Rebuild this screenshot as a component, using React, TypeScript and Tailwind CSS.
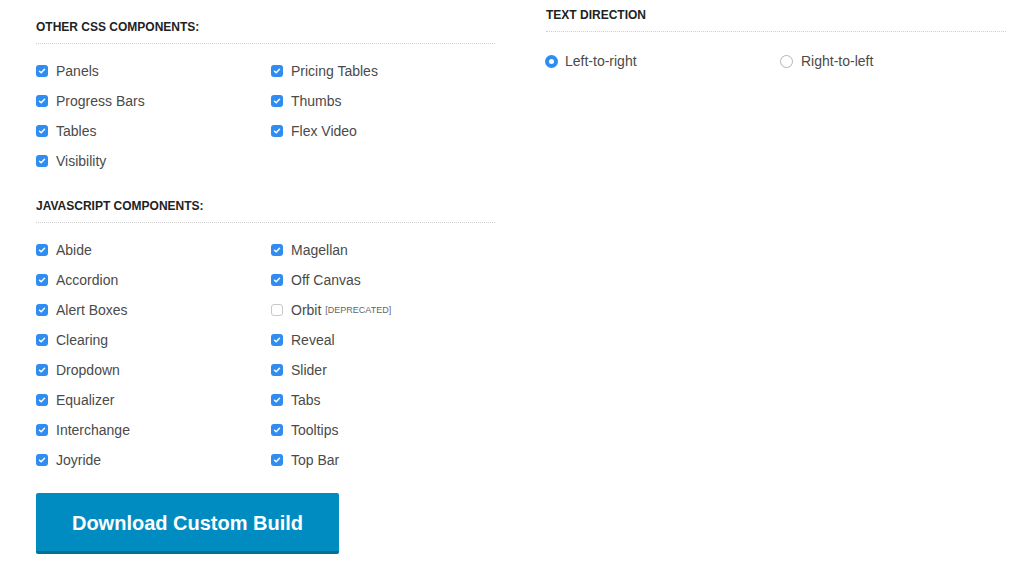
import { ReactNode } from "react";

const font = { fontFamily: '"Liberation Sans", Arial, sans-serif' };

function Check({ checked = true }: { checked?: boolean }) {
  if (!checked) {
    return <span className="inline-block h-[12px] w-[12px] rounded-[3px] border border-[#c8c8c8] bg-white" />;
  }
  return (
    <span className="inline-flex h-[12px] w-[12px] items-center justify-center rounded-[3px] bg-[#2f8cf0]">
      <svg width="8" height="8" viewBox="0 0 8 8" fill="none">
        <path d="M1.5 4.2 L3.2 5.8 L6.5 2.2" stroke="white" strokeWidth="1.5" strokeLinecap="round" strokeLinejoin="round" />
      </svg>
    </span>
  );
}

function Item({ label, checked = true, extra }: { label: string; checked?: boolean; extra?: ReactNode }) {
  return (
    <div className="flex h-[30px] items-center">
      <Check checked={checked} />
      <span className="ml-[8px] text-[14px] text-[#4a4a4a]">{label}</span>
      {extra}
    </div>
  );
}

function Heading({ children }: { children: ReactNode }) {
  return (
    <div className="border-b border-dotted border-[#cfcfcf] pb-[8px]">
      <h3 className="text-[12px] font-bold leading-[16px] text-[#222]">{children}</h3>
    </div>
  );
}

const css1 = ["Panels", "Progress Bars", "Tables", "Visibility"];
const css2 = ["Pricing Tables", "Thumbs", "Flex Video"];
const js1 = ["Abide", "Accordion", "Alert Boxes", "Clearing", "Dropdown", "Equalizer", "Interchange", "Joyride"];
const js2 = ["Magellan", "Off Canvas", "Orbit", "Reveal", "Slider", "Tabs", "Tooltips", "Top Bar"];

export default function App() {
  return (
    <div className="min-h-[578px] bg-white" style={font}>
      <div className="flex pl-[36px]">
        <div className="w-[459px] pt-[19px]">
          <Heading>OTHER CSS COMPONENTS:</Heading>
          <div className="mt-[12px] grid grid-cols-[235px_1fr]">
            <div>{css1.map((l) => <Item key={l} label={l} />)}</div>
            <div>{css2.map((l) => <Item key={l} label={l} />)}</div>
          </div>

          <div className="mt-[22px]">
            <Heading>JAVASCRIPT COMPONENTS:</Heading>
          </div>
          <div className="mt-[12px] grid grid-cols-[235px_1fr]">
            <div>{js1.map((l) => <Item key={l} label={l} />)}</div>
            <div>
              {js2.map((l) =>
                l === "Orbit" ? (
                  <Item
                    key={l}
                    label={l}
                    checked={false}
                    extra={<span className="ml-[4px] mt-[2px] text-[9px] text-[#666]">[DEPRECATED]</span>}
                  />
                ) : (
                  <Item key={l} label={l} />
                )
              )}
            </div>
          </div>

          <button className="mt-[18px] h-[61px] w-[303px] rounded-[2px] border-b-[3px] border-[#007095] bg-[#008cc1] pt-[2px] text-[20px] font-bold text-white">
            Download Custom Build
          </button>
        </div>

        <div className="ml-[51px] w-[460px] pt-[7px]">
          <Heading>TEXT DIRECTION</Heading>
          <div className="mt-[14px] grid grid-cols-[234px_1fr]">
            <div className="flex h-[30px] items-center">
              <span className="-ml-[1px] inline-flex h-[13px] w-[13px] items-center justify-center rounded-full bg-[#2f8cf0]">
                <span className="h-[5px] w-[5px] rounded-full bg-white" />
              </span>
              <span className="ml-[7px] text-[14px] text-[#4a4a4a]">Left-to-right</span>
            </div>
            <div className="flex h-[30px] items-center">
              <span className="inline-block h-[13px] w-[13px] rounded-full border border-[#b5b5b5] bg-white" />
              <span className="ml-[8px] text-[14px] text-[#4a4a4a]">Right-to-left</span>
            </div>
          </div>
        </div>
      </div>
    </div>
  );
}
